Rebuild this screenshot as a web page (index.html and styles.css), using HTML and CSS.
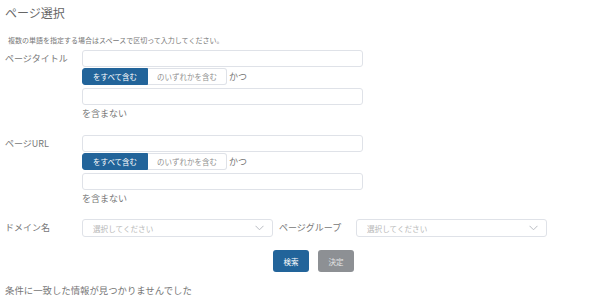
FILE: index.html
```html
<!DOCTYPE html>
<html lang="ja">
<head>
<meta charset="utf-8">
<title>ページ選択</title>
<link rel="stylesheet" href="styles.css">
</head>
<body>
<div class="page">
  <h1 class="title">ページ選択</h1>
  <p class="note">複数の単語を指定する場合はスペースで区切って入力してください。</p>

  <div class="field-row first">
    <div class="label">ページタイトル</div>
    <div class="fields">
      <input class="text-input" type="text">
      <div class="toggle-row">
        <div class="toggle">
          <span class="tbtn active">をすべて含む</span>
          <span class="tbtn">のいずれかを含む</span>
        </div>
        <span class="conj">かつ</span>
      </div>
      <input class="text-input second" type="text">
      <div class="exclude">を含まない</div>
    </div>
  </div>

  <div class="field-row">
    <div class="label">ページURL</div>
    <div class="fields">
      <input class="text-input" type="text">
      <div class="toggle-row">
        <div class="toggle">
          <span class="tbtn active">をすべて含む</span>
          <span class="tbtn">のいずれかを含む</span>
        </div>
        <span class="conj">かつ</span>
      </div>
      <input class="text-input second" type="text">
      <div class="exclude">を含まない</div>
    </div>
  </div>

  <div class="select-row">
    <div class="label">ドメイン名</div>
    <div class="select">
      <span class="placeholder">選択してください</span>
      <svg class="chev" width="9" height="6" viewBox="0 0 9 6"><polyline points="0.5,0.8 4.5,4.8 8.5,0.8" fill="none" stroke="#b9bcc2" stroke-width="1"/></svg>
    </div>
    <div class="label label2">ページグループ</div>
    <div class="select">
      <span class="placeholder">選択してください</span>
      <svg class="chev" width="9" height="6" viewBox="0 0 9 6"><polyline points="0.5,0.8 4.5,4.8 8.5,0.8" fill="none" stroke="#b9bcc2" stroke-width="1"/></svg>
    </div>
  </div>

  <div class="actions">
    <button class="btn primary">検索</button>
    <button class="btn disabled">決定</button>
  </div>

  <p class="result">条件に一致した情報が見つかりませんでした</p>
</div>
</body>
</html>
```
FILE: styles.css
```css
html, body {
  margin: 0;
  padding: 0;
  background: #ffffff;
}
body {
  font-family: "Noto Sans CJK JP", "Noto Sans", sans-serif;
  color: #777777;
}
.page {
  padding-left: 5px;
}
.title {
  margin: 0;
  padding-top: 5px;
  font-size: 12px;
  line-height: 16px;
  font-weight: normal;
  color: #666666;
}
.note {
  margin: 14px 0 0 3px;
  font-size: 7px;
  line-height: 10px;
  color: #777777;
}
.field-row {
  display: flex;
  margin-top: 13px;
}
.field-row.first {
  margin-top: 5px;
}
.label {
  width: 77px;
  flex: none;
  font-size: 9px;
  line-height: 17px;
  color: #777777;
}
.fields {
  display: flex;
  flex-direction: column;
  width: 281px;
}
.text-input {
  display: block;
  box-sizing: border-box;
  width: 281px;
  height: 17px;
  margin: 0;
  padding: 0 4px;
  border: 1px solid #dfe2e8;
  border-radius: 3px;
  background: #fff;
  outline: none;
}
.text-input.second {
  margin-top: 3px;
}
.toggle-row {
  display: flex;
  align-items: center;
  margin-top: 1px;
  height: 17px;
}
.toggle {
  display: flex;
  height: 17px;
}
.tbtn {
  box-sizing: border-box;
  height: 17px;
  display: flex;
  align-items: center;
  justify-content: center;
  font-size: 7.5px;
  color: #8f8f8f;
  background: #fff;
  border: 1px solid #dfe2e8;
  border-left: none;
  width: 79px;
  border-radius: 0 3px 3px 0;
}
.tbtn.active {
  width: 66px;
  background: #22649a;
  border: 1px solid #22649a;
  color: #ffffff;
  border-radius: 3px 0 0 3px;
}
.conj {
  margin-left: 2px;
  font-size: 9px;
  color: #777777;
}
.exclude {
  margin-top: 1px;
  font-size: 9px;
  line-height: 16px;
  color: #777777;
}
.select-row {
  display: flex;
  align-items: center;
  margin-top: 12px;
}
.select-row .label {
  line-height: 18px;
}
.label.label2 {
  width: 83px;
  padding-left: 6px;
  box-sizing: border-box;
}
.select {
  box-sizing: border-box;
  width: 191px;
  height: 18px;
  border: 1px solid #dfe2e8;
  border-radius: 3px;
  display: flex;
  align-items: center;
  justify-content: space-between;
  padding: 0 8px 0 10px;
}
.placeholder {
  font-size: 7.6px;
  color: #b8b8b8;
}
.chev {
  display: block;
}
.actions {
  display: flex;
  gap: 9px;
  margin-top: 13px;
  padding-left: 268px;
}
.btn {
  box-sizing: border-box;
  width: 36px;
  height: 22px;
  border: none;
  border-radius: 3px;
  font-family: "Noto Sans CJK JP", sans-serif;
  font-size: 7.5px;
  color: #fff;
  padding: 0;
}
.btn.primary {
  background: #22649a;
}
.btn.disabled {
  background: #8d9094;
  color: #e4e4e4;
}
.result {
  margin: 11px 0 0 0;
  font-size: 9.4px;
  line-height: 14px;
  color: #777777;
}
```
